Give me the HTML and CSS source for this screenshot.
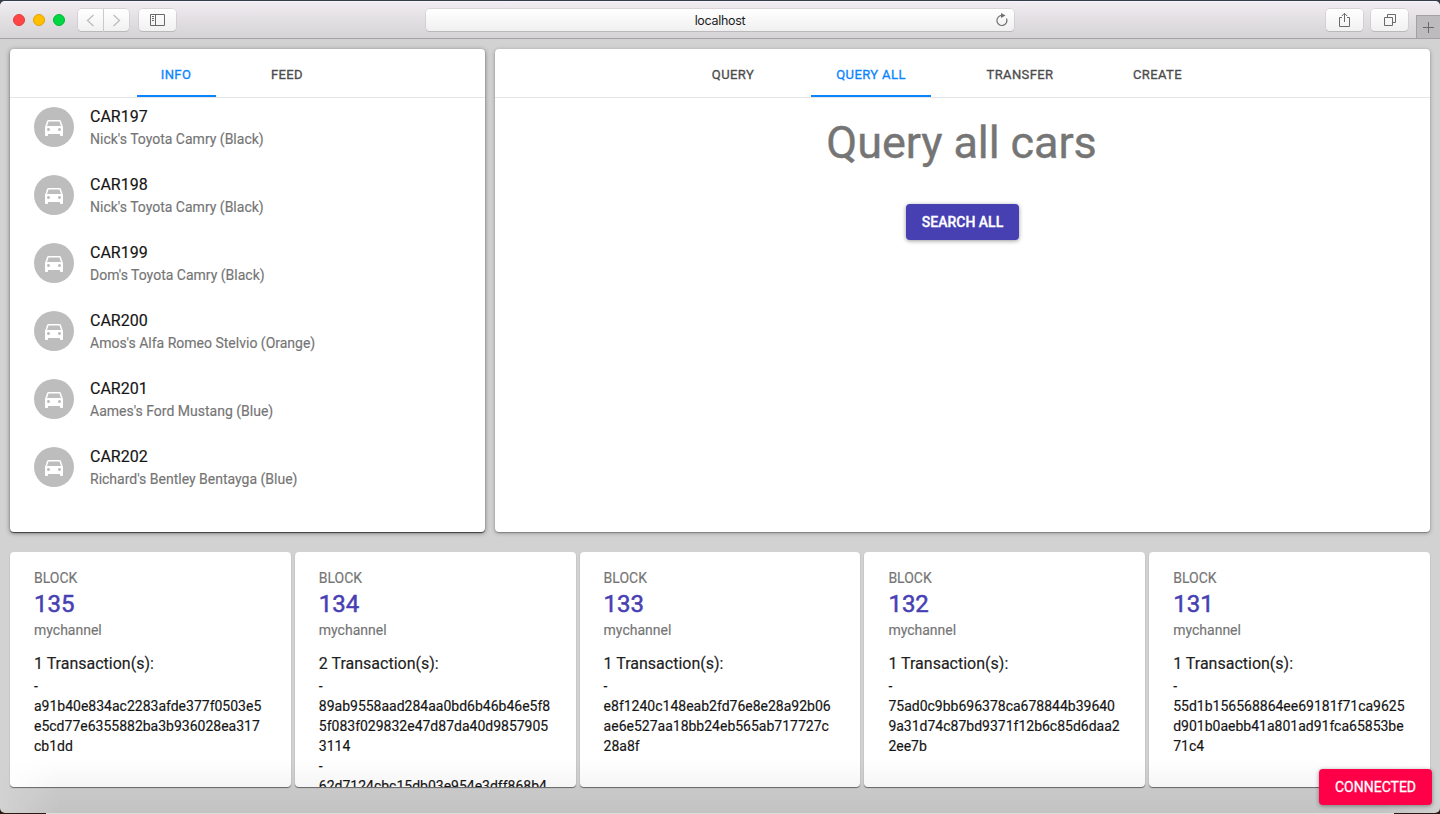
FILE: index.html
```html
<!DOCTYPE html>
<html lang="en">
<head>
<meta charset="utf-8">
<title>localhost</title>
<link rel="stylesheet" href="styles.css">
</head>
<body>
<svg class="defs" width="0" height="0">
  <symbol id="car" viewBox="0 0 24 24"><path d="M18.92 6.01C18.72 5.42 18.16 5 17.5 5h-11c-.66 0-1.21.42-1.42 1.01L3 12v8c0 .55.45 1 1 1h1c.55 0 1-.45 1-1v-1h12v1c0 .55.45 1 1 1h1c.55 0 1-.45 1-1v-8l-2.08-5.99zM6.5 16c-.83 0-1.5-.67-1.5-1.5S5.67 13 6.5 13s1.5.67 1.5 1.5S7.33 16 6.5 16zm11 0c-.83 0-1.5-.67-1.5-1.5s.67-1.5 1.5-1.5 1.5.67 1.5 1.5-.67 1.5-1.5 1.5zM5 11l1.5-4.5h11L19 11H5z"/></symbol>
</svg>
<div class="window">
  <header class="toolbar">
    <div class="lights"><i class="red"></i><i class="yellow"></i><i class="green"></i></div>
    <div class="nav">
      <span class="btn half left"><svg width="26" height="22" viewBox="0 0 26 22"><path d="M15.5 6 9.5 11.5 15.5 17"/></svg></span>
      <span class="btn half right"><svg width="26" height="22" viewBox="0 0 26 22"><path d="M9.5 6 15.5 11.5 9.5 17"/></svg></span>
    </div>
    <span class="btn sidebar"><svg width="36" height="22" viewBox="0 0 36 22"><path d="M10.500 5.500h14v11h-14zM15.500 5.500v11M12 7.500h2M12 9.500h2M12 11.500h2"/></svg></span>
    <div class="address"><span>localhost</span>
      <svg class="reload" width="14" height="16" viewBox="0 0 14 16"><path d="M7.500 3.500A5 5 0 1 0 11.500 6.500" fill="none" stroke="#707070" stroke-width="1.200"/><path d="M6 1v5l4.500-2.500z" fill="#707070"/></svg>
    </div>
    <div class="actions">
      <span class="btn"><svg width="36" height="22" viewBox="0 0 36 22"><path d="M16 8.500h-2.500v9h10v-9H21M18.500 13V4.500M15.800 7l2.700-2.700L21.200 7"/></svg></span>
      <span class="btn"><svg width="36" height="22" viewBox="0 0 36 22"><path d="M13.500 8.500h8v8h-8zM16.500 8V5.500h8v8H22"/></svg></span>
    </div>
    <span class="newtab"><svg width="23" height="23" viewBox="0 0 23 23"><path d="M6 12.500h11M11.500 7v11"/></svg></span>
  </header>
  <main class="page">
    <div class="panels">
      <section class="card info">
        <nav class="tabs"><a class="tab active">INFO</a><a class="tab">FEED</a></nav>
        <ul class="cars">
          <li><span class="avatar"><svg><use href="#car"/></svg></span><div><b>CAR197</b><p>Nick's Toyota Camry (Black)</p></div></li>
          <li><span class="avatar"><svg><use href="#car"/></svg></span><div><b>CAR198</b><p>Nick's Toyota Camry (Black)</p></div></li>
          <li><span class="avatar"><svg><use href="#car"/></svg></span><div><b>CAR199</b><p>Dom's Toyota Camry (Black)</p></div></li>
          <li><span class="avatar"><svg><use href="#car"/></svg></span><div><b>CAR200</b><p>Amos's Alfa Romeo Stelvio (Orange)</p></div></li>
          <li><span class="avatar"><svg><use href="#car"/></svg></span><div><b>CAR201</b><p>Aames's Ford Mustang (Blue)</p></div></li>
          <li><span class="avatar"><svg><use href="#car"/></svg></span><div><b>CAR202</b><p>Richard's Bentley Bentayga (Blue)</p></div></li>
        </ul>
      </section>
      <section class="card query">
        <nav class="tabs"><a class="tab w-query">QUERY</a><a class="tab active w-all">QUERY ALL</a><a class="tab w-transfer">TRANSFER</a><a class="tab w-create">CREATE</a></nav>
        <h1>Query all cars</h1>
        <button class="search">SEARCH ALL</button>
      </section>
    </div>
    <div class="blocks">
      <article class="block"><h3>BLOCK</h3><h2>135</h2><h3>mychannel</h3><h4>1 Transaction(s):</h4><p>-<br>a91b40e834ac2283afde377f0503e5<br>e5cd77e6355882ba3b936028ea317<br>cb1dd</p></article>
      <article class="block"><h3>BLOCK</h3><h2>134</h2><h3>mychannel</h3><h4>2 Transaction(s):</h4><p>-<br>89ab9558aad284aa0bd6b46b46e5f8<br>5f083f029832e47d87da40d9857905<br>3114<br>-<br>62d7124cbc15db03e954e3dff868b4</p></article>
      <article class="block"><h3>BLOCK</h3><h2>133</h2><h3>mychannel</h3><h4>1 Transaction(s):</h4><p>-<br>e8f1240c148eab2fd76e8e28a92b06<br>ae6e527aa18bb24eb565ab717727c<br>28a8f</p></article>
      <article class="block"><h3>BLOCK</h3><h2>132</h2><h3>mychannel</h3><h4>1 Transaction(s):</h4><p>-<br>75ad0c9bb696378ca678844b39640<br>9a31d74c87bd9371f12b6c85d6daa2<br>2ee7b</p></article>
      <article class="block"><h3>BLOCK</h3><h2>131</h2><h3>mychannel</h3><h4>1 Transaction(s):</h4><p>-<br>55d1b156568864ee69181f71ca9625<br>d901b0aebb41a801ad91fca65853be<br>71c4</p></article>
    </div>
  </main>
  <div class="shade"></div>
  <button class="status">CONNECTED</button>
</div>
<div class="edge"></div>
</body>
</html>
```
FILE: styles.css
```css
* { box-sizing: border-box; }
body { margin: 0; height: 814px; overflow: hidden; padding-top: 1px; background: linear-gradient(#343b4b 0 50%, #2b1a10 50%); font-family: Roboto, "Liberation Sans", sans-serif; }
h1, h2, h3, h4, p, ul { margin: 0; padding: 0; font-weight: 400; }
.defs { position: absolute; }
.window { position: relative; height: 812px; border-radius: 5px; overflow: hidden; background: #d2d2d2; }
.edge { height: 1px; margin: 0 46px; background: #dedede; }

.toolbar { position: relative; height: 38px; display: flex; align-items: flex-start; padding: 7px 32px 0 13px; background: linear-gradient(#f0ecf1, #d5d3d5); border-top: 1px solid #f6f3f7; border-bottom: 1px solid #a2a2a2; }
.lights { display: flex; gap: 8px; padding-top: 5px; width: 65px; }
.lights i { width: 12px; height: 12px; border-radius: 50%; border: 1px solid #e23b3b; background: #ff4545; }
.lights .yellow { background: #ffbf00; border-color: #e0a000; }
.lights .green { background: #00d742; border-color: #00b535; }
.nav { display: flex; margin-right: 10px; }
.btn { display: block; width: 37px; height: 22px; border-radius: 4px; background: linear-gradient(#fff, #f1f1f1); box-shadow: 0 0 0 .5px #c4c2c4, 0 1px 0 #b3b1b3; }
.btn svg, .newtab svg { display: block; margin: 0 auto; fill: none; stroke: #6a6a6a; }
.btn svg { margin-left: 0; }
.sidebar svg { margin-left: 1px; }
.half { width: 25px; }
.half svg { stroke: #bdbdbd; stroke-width: 1.3; }
.left { border-radius: 4px 0 0 4px; margin-right: 1px; }
.right { border-radius: 0 4px 4px 0; }
.address { display: flex; align-items: center; justify-content: center; width: 588px; height: 22px; margin-left: 250px; border-radius: 4px; background: linear-gradient(#fff, #f0f0f0); box-shadow: 0 0 0 .5px #c4c2c4, 0 1px 0 #b3b1b3; position: relative; font: 12.5px Inter, sans-serif; letter-spacing: -.3px; color: #1c1c1c; }
.reload { position: absolute; right: 5px; top: 3px; }
.actions { display: flex; gap: 8px; margin-left: auto; }
.newtab { position: absolute; right: 0; top: 13px; width: 24px; height: 23px; background: #bdbbbd; border: 1px solid #a3a1a3; border-width: 1px 0 0 1px; }
.newtab svg { margin-top: -1px; }

.page { padding: 10px; }
.panels { display: flex; gap: 10px; height: 483px; }
.card { background: #fff; border-radius: 4px; }
.info { width: 475px; box-shadow: 0 1px 1px rgba(0,0,0,.6), 0 1px 5px rgba(0,0,0,.45); }
.query { width: 935px; text-align: center; box-shadow: 0 1px 1px rgba(0,0,0,.25), 0 1px 4px rgba(0,0,0,.3); }
.tabs { display: flex; justify-content: center; height: 49px; border-bottom: 1px solid #e5e5e5; text-align: center; }
.tab { width: 79px; height: 48px; line-height: 51px; margin-right: 32px; font-size: 13px; font-weight: 400; letter-spacing: .4px; -webkit-text-stroke: .3px; color: #4c4c4c; border-bottom: 2px solid transparent; white-space: nowrap; }
.w-query { width: 92px; }
.w-all { width: 120px; }
.w-transfer { width: 114px; }
.w-create { width: 97px; }
.active { color: #0a84ff; border-color: #0a84ff; }
.cars { list-style: none; }
.cars li { display: flex; height: 68px; padding: 9px 24px 0; gap: 16px; }
.avatar { width: 40px; height: 40px; border-radius: 50%; background: #bdbdbd; display: grid; place-items: center; }
.avatar svg { width: 22px; height: 22px; fill: #fff; }
.cars b { display: block; font-weight: 400; font-size: 16px; line-height: 20px; color: #151515; }
.cars p { font-size: 14px; line-height: 20px; padding-top: 2px; color: #757575; }
.cars b, .cars p, .block h3, .block h4, .block p { -webkit-text-stroke: .15px; }
h1 { font-size: 45px; line-height: 48px; padding-top: 21px; color: #757575; letter-spacing: -.1px; -webkit-text-stroke: .4px; text-indent: -2px; }
button { border: 0; border-radius: 4px; height: 36px; padding: 0; font: 500 14px/36px Roboto, sans-serif; color: #fff; box-shadow: 0 1px 4px rgba(0,0,0,.4); }
.search { width: 113px; margin: 37px auto 0; background: #4740b3; display: block; -webkit-text-stroke: .3px; }

.blocks { display: grid; grid-template-columns: repeat(5, 1fr); gap: 4px; margin-top: 20px; }
.block { height: 235px; overflow: hidden; padding: 16px 24px 0; background: #fff; border-radius: 4px; box-shadow: 0 1px 1px rgba(0,0,0,.5); color: #212121; }
.block h3 { font-size: 14px; line-height: 20px; color: #757575; }
.block h2 { font-size: 24px; line-height: 32px; color: #4740b3; font-weight: 400; -webkit-text-stroke: .5px; }
.block h4 { font-size: 16px; line-height: 24px; margin-top: 12px; }
.block p { font-size: 14px; line-height: 20px; color: #151515; }
.avatar svg { width: 24px; height: 24px; }
.shade { position: absolute; left: 0; right: 0; bottom: 0; height: 55px; background: linear-gradient(rgba(0,0,0,0), rgba(0,0,0,.07)); -webkit-mask-image: linear-gradient(90deg, transparent, #000 60px, #000 calc(100% - 60px), transparent); }
.status { position: absolute; right: 8px; bottom: 8px; width: 113px; background: #ff0048; font-weight: 400; -webkit-text-stroke: .3px; }
```
